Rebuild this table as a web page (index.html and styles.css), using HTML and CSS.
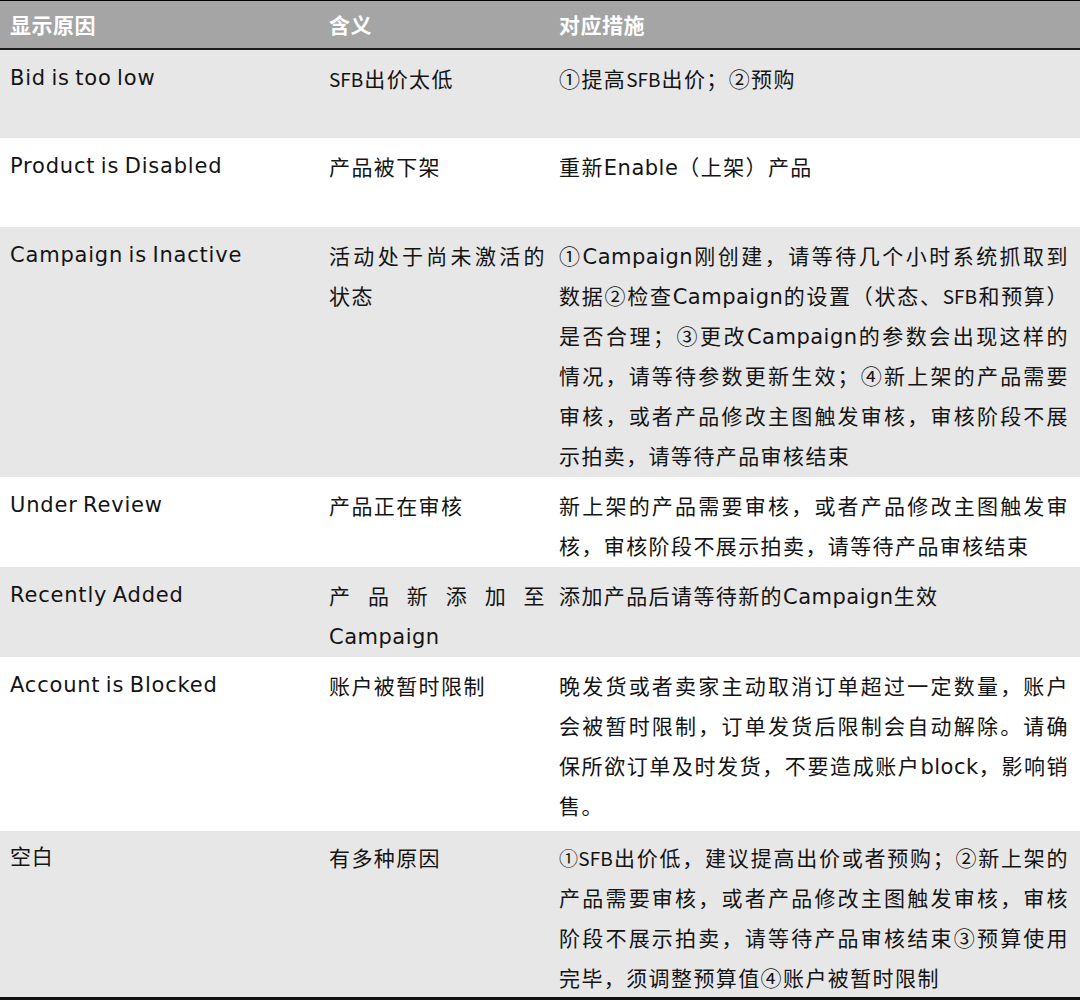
FILE: index.html
```html
<!DOCTYPE html>
<html lang="zh-CN">
<head>
<meta charset="utf-8">
<title>显示原因</title>
<link rel="stylesheet" href="styles.css">
</head>
<body>
<table class="reasons">
  <colgroup>
    <col class="c1">
    <col class="c2">
    <col class="c3">
  </colgroup>
  <thead>
    <tr class="head">
      <th>显示原因</th>
      <th>含义</th>
      <th>对应措施</th>
    </tr>
  </thead>
  <tbody>
    <tr class="row gray short">
      <td class="en">Bid is too low</td>
      <td class="mean"><span class="abbr">SFB</span>出价太低</td>
      <td class="act">①提高<span class="abbr">SFB</span>出价；②预购</td>
    </tr>
    <tr class="row short">
      <td class="en">Product is Disabled</td>
      <td class="mean">产品被下架</td>
      <td class="act">重新<span class="lat">Enable</span>（上架）产品</td>
    </tr>
    <tr class="row gray">
      <td class="en">Campaign is Inactive</td>
      <td class="mean">活动处于尚未激活的状态</td>
      <td class="act">①<span class="lat">Campaign</span>刚创建，请等待几个小时系统抓取到数据②检查<span class="lat">Campaign</span>的设置（状态、<span class="abbr">SFB</span>和预算）是否合理；③更改<span class="lat">Campaign</span>的参数会出现这样的情况，请等待参数更新生效；④新上架的产品需要审核，或者产品修改主图触发审核，审核阶段不展示拍卖，请等待产品审核结束</td>
    </tr>
    <tr class="row">
      <td class="en">Under Review</td>
      <td class="mean">产品正在审核</td>
      <td class="act">新上架的产品需要审核，或者产品修改主图触发审核，审核阶段不展示拍卖，请等待产品审核结束</td>
    </tr>
    <tr class="row gray">
      <td class="en">Recently Added</td>
      <td class="mean">产品新添加至<span class="lat">Campaign</span></td>
      <td class="act">添加产品后请等待新的<span class="lat">Campaign</span>生效</td>
    </tr>
    <tr class="row loose">
      <td class="en">Account is Blocked</td>
      <td class="mean">账户被暂时限制</td>
      <td class="act">晚发货或者卖家主动取消订单超过一定数量，账户会被暂时限制，订单发货后限制会自动解除。请确保所欲订单及时发货，不要造成账户<span class="lat">block</span>，影响销售。</td>
    </tr>
    <tr class="row gray tight">
      <td class="en">空白</td>
      <td class="mean">有多种原因</td>
      <td class="act"><span class="abbr">①SFB</span>出价低，建议提高出价或者预购；②新上架的产品需要审核，或者产品修改主图触发审核，审核阶段不展示拍卖，请等待产品审核结束③预算使用完毕，须调整预算值④账户被暂时限制</td>
    </tr>
  </tbody>
</table>
</body>
</html>
```

FILE: styles.css
```css
html, body {
  margin: 0;
  padding: 0;
  background: #ffffff;
}

body {
  width: 1080px;
  font-family: "Noto Sans CJK SC", sans-serif;
  color: #141414;
}

.reasons {
  width: 1080px;
  border-collapse: collapse;
  table-layout: fixed;
  border-top: 1px solid #000;
  border-bottom: 3px solid #111;
}

.c1 { width: 319px; }
.c2 { width: 230px; }
.c3 { width: 531px; }

.head {
  background: #a5a5a5;
  height: 48px;
  border-bottom: 2px solid #1c1c1c;
}

.head th {
  text-align: left;
  vertical-align: middle;
  padding: 0 3px 0 10px;
  color: #ffffff;
  font-family: "Noto Sans CJK SC", sans-serif;
  font-weight: 700;
  font-size: 21px;
  letter-spacing: 0.5px;
  line-height: 28px;
}

.row td {
  vertical-align: top;
  padding: 8px 3px 2px 10px;
  font-size: 21px;
  line-height: 40px;
  text-align: justify;
}

.row.gray {
  background: #e7e7e7;
}

.row.short {
  height: 89px;
}

.row.loose td {
  padding-bottom: 6px;
}

.row.tight td {
  padding-top: 6px;
  padding-bottom: 0;
}

.row td.en {
  font-family: "DejaVu Sans", "Noto Sans CJK SC", sans-serif;
  letter-spacing: 0.8px;
  word-spacing: -2px;
  text-align: left;
}

.row td.mean,
.row td.act {
  letter-spacing: 1.4px;
}

.row td.act {
  padding-right: 11px;
}

.lat {
  font-family: "DejaVu Sans", sans-serif;
  letter-spacing: 0.5px;
  line-height: 1;
}

.abbr {
  font-size: 19px;
  letter-spacing: 0;
  line-height: 1;
  margin-right: 1px;
}
```
